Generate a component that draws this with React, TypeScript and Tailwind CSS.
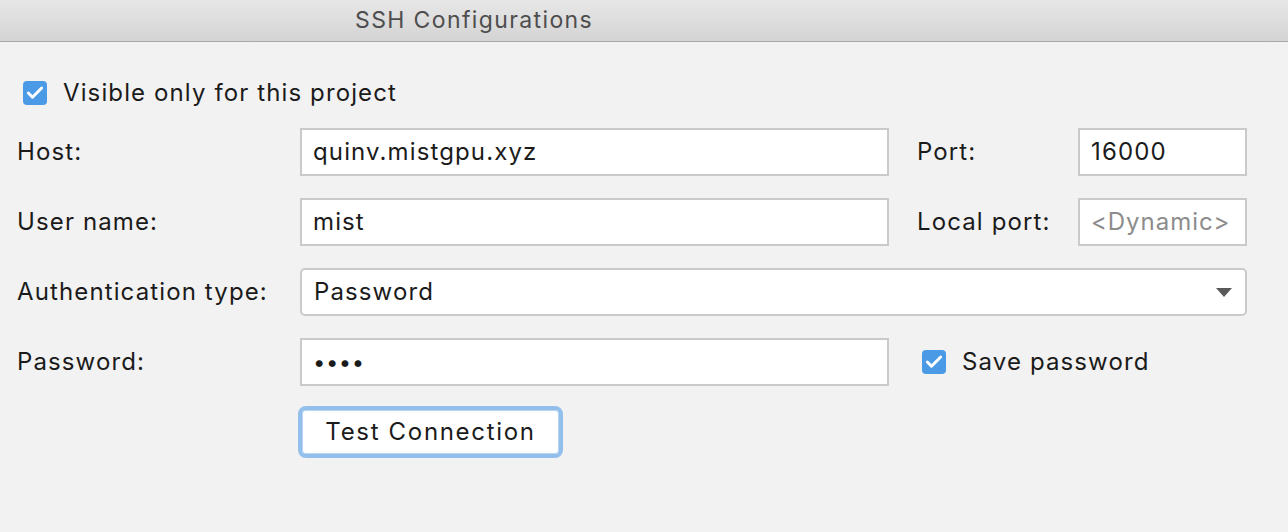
import { Check } from "lucide-react";

function Box() {
  return (
    <span className="flex h-6 w-6 shrink-0 items-center justify-center rounded-[4px] bg-[#4b9ae6]">
      <Check className="h-5 w-5 text-white" strokeWidth={3.5} />
    </span>
  );
}

const field = "flex h-12 items-center border-2 border-[#cacaca] bg-white px-[11px] text-[24px] text-[#1b1b1b]";

export default function App() {
  return (
    <div className="h-[532px] w-[1288px] bg-[#f2f2f2] font-['Inter','Noto_Sans',sans-serif] tracking-[0.07em] text-[#1b1b1b]">
      <div className="flex h-[42px] items-center border-b border-[#a9a9a9] bg-gradient-to-b from-[#e7e7e7] to-[#d4d4d4] pl-[355px]">
        <span className="text-[23px] tracking-[0.06em] text-[#4e4e4e]">SSH Configurations</span>
      </div>

      <div className="flex flex-col pl-[17px] pr-[41px]">
        <label className="mt-[39px] ml-[6px] flex h-6 items-center gap-4 text-[24px]">
          <Box />
          <span>Visible only for this project</span>
        </label>

        <div className="mt-[23px] flex items-center">
          <span className="w-[283px] text-[24px]">Host:</span>
          <div className={`${field} w-[589px]`}>quinv.mistgpu.xyz</div>
          <span className="ml-[28px] w-[161px] text-[24px]">Port:</span>
          <div className={`${field} w-[169px]`}>16000</div>
        </div>

        <div className="mt-[22px] flex items-center">
          <span className="w-[283px] text-[24px]">User name:</span>
          <div className={`${field} w-[589px]`}>mist</div>
          <span className="ml-[28px] w-[161px] text-[24px]">Local port:</span>
          <div className={`${field} w-[169px]`}>
            <span className="tracking-[0.04em] text-[#8c8c8c]">&lt;Dynamic&gt;</span>
          </div>
        </div>

        <div className="mt-[22px] flex items-center">
          <span className="w-[283px] text-[24px]">Authentication type:</span>
          <div className="flex h-12 w-[947px] items-center justify-between rounded-[5px] border-2 border-[#cacaca] bg-white pl-[12px] pr-[12px] text-[24px]">
            <span>Password</span>
            <svg width="18" height="11" viewBox="0 0 18 11">
              <path d="M1 1h16L9 10z" fill="#5a5a5a" />
            </svg>
          </div>
        </div>

        <div className="mt-[22px] flex items-center">
          <span className="w-[283px] text-[24px]">Password:</span>
          <div className={`${field} w-[589px]`}>
            <span className="text-[22px] tracking-[0.5px]">••••</span>
          </div>
          <label className="ml-[33px] flex items-center gap-4 text-[24px]">
            <Box />
            <span>Save password</span>
          </label>
        </div>

        <div className="mt-[20px] ml-[281px]">
          <button
            type="button"
            className="h-[52px] w-[265px] rounded-[8px] border-[4px] border-[#93bfed] bg-white text-[24px] tracking-[0.07em] text-[#1b1b1b] shadow-[inset_0_0_0_1px_#b9d4f2]"
          >
            Test Connection
          </button>
        </div>
      </div>
    </div>
  );
}
